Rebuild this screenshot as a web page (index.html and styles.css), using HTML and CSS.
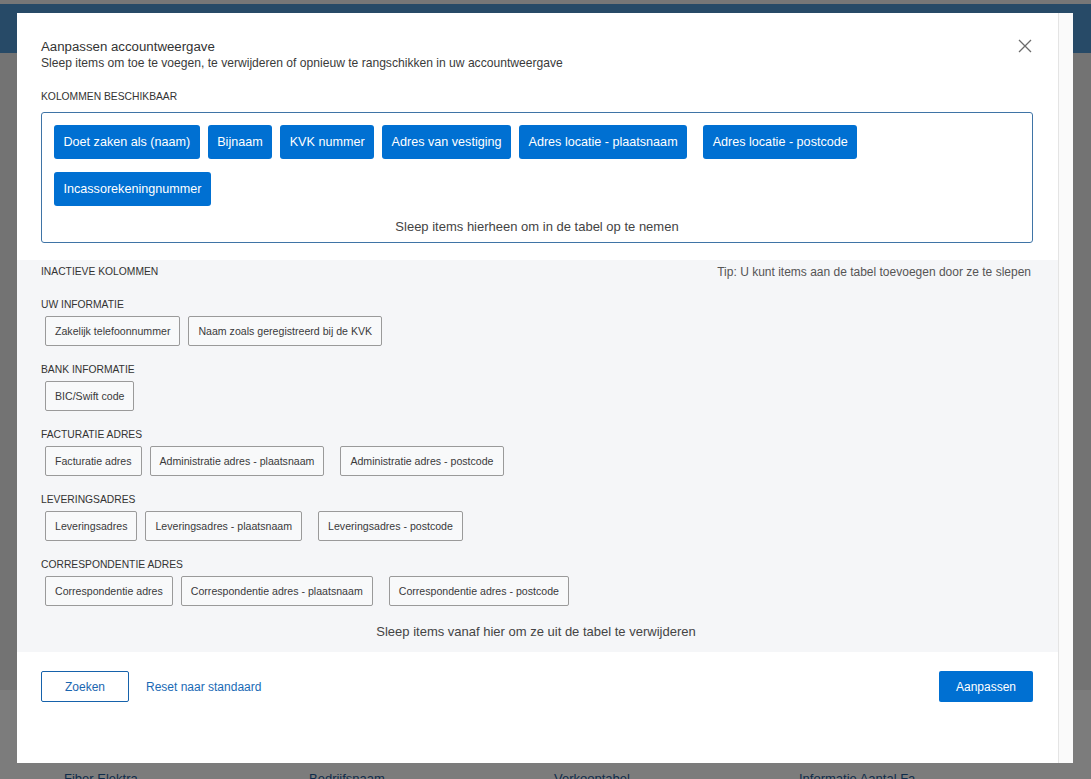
FILE: index.html
```html
<!DOCTYPE html>
<html lang="nl">
<head>
<meta charset="utf-8">
<title>Aanpassen accountweergave</title>
<link rel="stylesheet" href="styles.css">
</head>
<body>
<div class="page">
  <div class="page-strip"></div>
  <div class="page-header"></div>
  <div class="page-main"></div>
  <div class="page-lower">
    <div class="page-links">
      <span>Fiber Elektra</span><span>Bedrijfsnaam</span><span>Verkooptabel</span><span>Informatie Aantal Fa</span>
    </div>
  </div>
</div>
<div class="overlay"></div>
<div class="modal">
  <div class="modal-content">
    <div class="modal-head">
      <div class="modal-titles">
        <div class="modal-title">Aanpassen accountweergave</div>
        <div class="modal-subtitle">Sleep items om toe te voegen, te verwijderen of opnieuw te rangschikken in uw accountweergave</div>
      </div>
      <button class="close" aria-label="Sluiten">
        <svg width="14" height="14" viewBox="0 0 14 14"><path d="M1 1 L13 13 M13 1 L1 13" stroke="#6b6b6b" stroke-width="1.3" fill="none"/></svg>
      </button>
    </div>

    <div class="section-label available-label">KOLOMMEN BESCHIKBAAR</div>
    <div class="available-box">
      <div class="chip-list">
        <span class="chip-blue">Doet zaken als (naam)</span>
        <span class="chip-blue">Bijnaam</span>
        <span class="chip-blue">KVK nummer</span>
        <span class="chip-blue">Adres van vestiging</span>
        <span class="chip-blue">Adres locatie - plaatsnaam</span>
        <span class="chip-blue spaced">Adres locatie - postcode</span>
        <span class="chip-blue">Incassorekeningnummer</span>
      </div>
      <div class="drop-hint">Sleep items hierheen om in de tabel op te nemen</div>
    </div>

    <div class="inactive-panel">
      <div class="inactive-head">
        <span class="section-label">INACTIEVE KOLOMMEN</span>
        <span class="tip">Tip: U kunt items aan de tabel toevoegen door ze te slepen</span>
      </div>

      <div class="group">
        <div class="section-label">UW INFORMATIE</div>
        <div class="chips-grey">
          <span class="chip-grey">Zakelijk telefoonnummer</span>
          <span class="chip-grey">Naam zoals geregistreerd bij de KVK</span>
        </div>
      </div>
      <div class="group">
        <div class="section-label">BANK INFORMATIE</div>
        <div class="chips-grey">
          <span class="chip-grey">BIC/Swift code</span>
        </div>
      </div>
      <div class="group">
        <div class="section-label">FACTURATIE ADRES</div>
        <div class="chips-grey">
          <span class="chip-grey">Facturatie adres</span>
          <span class="chip-grey">Administratie adres - plaatsnaam</span>
          <span class="chip-grey spaced">Administratie adres - postcode</span>
        </div>
      </div>
      <div class="group">
        <div class="section-label">LEVERINGSADRES</div>
        <div class="chips-grey">
          <span class="chip-grey">Leveringsadres</span>
          <span class="chip-grey">Leveringsadres - plaatsnaam</span>
          <span class="chip-grey spaced">Leveringsadres - postcode</span>
        </div>
      </div>
      <div class="group">
        <div class="section-label">CORRESPONDENTIE ADRES</div>
        <div class="chips-grey">
          <span class="chip-grey">Correspondentie adres</span>
          <span class="chip-grey">Correspondentie adres - plaatsnaam</span>
          <span class="chip-grey spaced">Correspondentie adres - postcode</span>
        </div>
      </div>
      <div class="drop-hint remove-hint">Sleep items vanaf hier om ze uit de tabel te verwijderen</div>
    </div>

    <div class="modal-footer">
      <button class="btn-outline">Zoeken</button>
      <a class="link" href="#">Reset naar standaard</a>
      <span class="footer-spacer"></span>
      <button class="btn-primary">Aanpassen</button>
    </div>
  </div>
  <div class="scroll-gutter"></div>
</div>
</body>
</html>
```
FILE: styles.css
```css
* { box-sizing: border-box; }
html, body { margin: 0; padding: 0; }
body {
  width: 1091px;
  height: 779px;
  overflow: hidden;
  position: relative;
  font-family: "Liberation Sans", Arial, Helvetica, sans-serif;
  color: #333;
}
.page { display: flex; flex-direction: column; height: 779px; }
.page-strip { height: 4px; background: #eeeeee; }
.page-header { height: 49px; background: #4e94ce; }
.page-main { height: 637px; background: #e6e6e6; }
.page-lower { flex: 1; background: #f8f8f8; overflow: hidden; }
.page-links {
  display: flex;
  padding: 81px 0 0 64px;
  font-size: 13px;
  line-height: 15px;
  color: #1f5a96;
}
.page-links span { width: 245px; }

.overlay {
  position: absolute;
  inset: 0;
  background: rgba(0, 0, 0, 0.5);
}
.modal {
  position: absolute;
  left: 17px;
  top: 13px;
  width: 1056px;
  height: 750px;
  background: #fff;
  display: flex;
  overflow: hidden;
}
.modal-content { flex: 1; display: flex; flex-direction: column; }
.scroll-gutter {
  width: 15px;
  background: #fafafa;
  border-left: 1px solid #e4e4e4;
}

.modal-head {
  display: flex;
  justify-content: space-between;
  padding: 25px 25px 0 24px;
}
.modal-title { font-size: 13.25px; line-height: 17px; color: #333; }
.modal-subtitle { font-size: 12.1px; line-height: 17px; color: #3a3a3a; }
.close {
  border: 0;
  background: none;
  padding: 0;
  margin: 1px 1px 0 0;
  width: 14px;
  height: 14px;
  cursor: pointer;
}
.close svg { display: block; }

.section-label {
  font-size: 10.3px;
  line-height: 12px;
  color: #333;
}
.available-label { margin: 19px 24px 9px; }

.available-box {
  margin: 0 25px 0 24px;
  border: 1px solid #3f74a6;
  border-radius: 3px;
  padding: 12px 12px 7px;
}
.chip-list {
  display: flex;
  flex-wrap: wrap;
  column-gap: 8px;
  row-gap: 13px;
  padding-right: 30px;
}
.chip-blue {
  display: inline-flex;
  align-items: center;
  height: 34px;
  padding: 0 9.5px;
  background: #0070d2;
  color: #fff;
  font-size: 12.6px;
  border-radius: 3px;
}
.spaced { margin-left: 8px; }
.drop-hint {
  text-align: center;
  font-size: 13px;
  line-height: 16px;
  color: #444;
  margin-top: 13px;
}

.inactive-panel {
  margin-top: 17px;
  background: #f5f6f8;
  padding: 6px 27px 12px 24px;
}
.inactive-head {
  display: flex;
  justify-content: space-between;
  align-items: center;
  height: 12px;
  margin-bottom: 21px;
}
.tip { font-size: 12px; color: #555; }
.group { margin-bottom: 18px; }
.chips-grey {
  display: flex;
  flex-wrap: wrap;
  gap: 8px;
  margin: 5px 0 0 4px;
}
.chip-grey {
  display: inline-flex;
  align-items: center;
  height: 30px;
  padding: 0 9px;
  border: 1px solid #9a9a9a;
  border-radius: 2px;
  background: #f8f9fa;
  font-size: 10.6px;
  color: #3a3a3a;
}
.remove-hint { margin-top: 2px; }

.modal-footer {
  display: flex;
  align-items: center;
  padding: 19px 25px 0 24px;
}
.btn-outline {
  width: 88px;
  height: 31px;
  border: 1px solid #1662ab;
  border-radius: 2px;
  background: #fff;
  color: #1a66b0;
  font-family: inherit;
  font-size: 12px;
}
.link {
  margin-left: 17px;
  font-size: 12px;
  color: #1a6ab5;
  text-decoration: none;
}
.footer-spacer { flex: 1; }
.btn-primary {
  width: 94px;
  height: 31px;
  border: 0;
  border-radius: 2px;
  background: #0070d2;
  color: #fff;
  font-family: inherit;
  font-size: 12px;
}
```
